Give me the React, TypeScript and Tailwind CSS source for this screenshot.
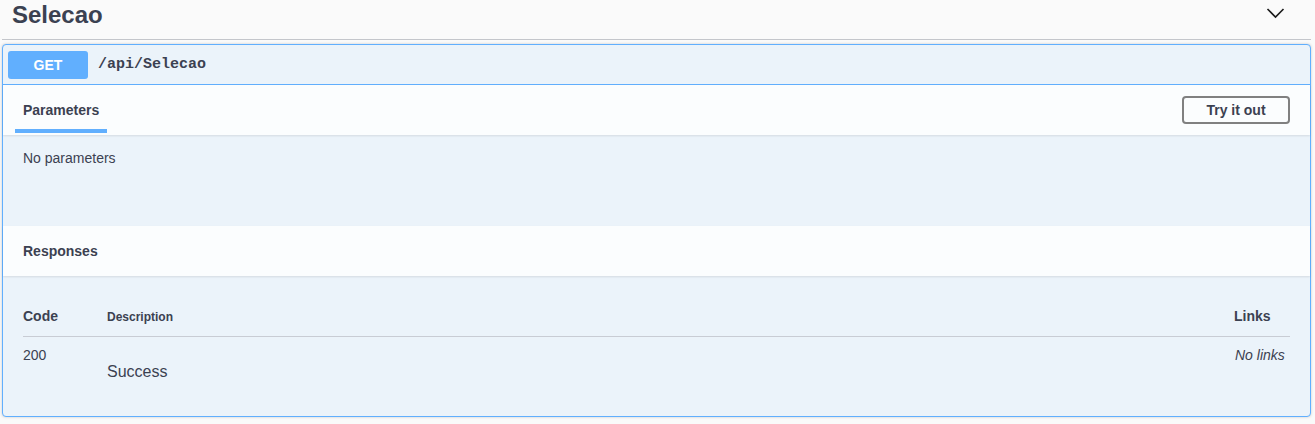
import React from "react";

export default function App() {
  return (
    <div
      className="min-h-[424px] w-full bg-[#fafafa] pl-[2px] pr-[4px] text-[#3b4151]"
      style={{ fontFamily: '"Liberation Sans", Arial, sans-serif' }}
    >
      {/* Tag header */}
      <div className="flex h-[40px] items-start justify-between border-b border-[#c4c6cb] pl-[10px] pr-[26px]">
        <h3 className="pt-[1px] text-[24px] font-bold leading-[27px]">Selecao</h3>
        <svg width="19" height="12" viewBox="0 0 19 12" className="mt-[7px]">
          <polyline points="1.5,2 9.5,10 17.5,2" fill="none" stroke="#1a1a1a" strokeWidth="1.6" />
        </svg>
      </div>

      {/* Opblock */}
      <div className="mt-[4px] rounded-[4px] border border-[#61affe] bg-[#ebf3fa] shadow-[0_0_3px_rgba(0,0,0,0.19)]">
        {/* Summary */}
        <div className="flex items-center border-b border-[#61affe] pb-[5px] pl-[5px] pt-[6px]">
          <span className="flex h-[28px] w-[80px] items-center justify-center rounded-[3px] bg-[#61affe] text-[14px] font-bold text-white">
            GET
          </span>
          <span
            className="px-[10px] text-[15px] font-bold text-[#3b4151]"
            style={{ fontFamily: '"Liberation Mono", "Courier New", monospace' }}
          >
            /api/Selecao
          </span>
        </div>

        {/* Parameters header */}
        <div className="flex h-[50px] items-stretch justify-between bg-[#fbfdfe] px-[20px] shadow-[0_1px_2px_rgba(0,0,0,0.1)]">
          <div className="-ml-[8px] flex flex-col pt-[6px]">
            <div className="flex flex-1 items-center px-[8px] text-[14px] font-bold">Parameters</div>
            <div className="mb-[2px] h-[4px] bg-[#61affe]" />
          </div>
          <div className="flex items-center">
            <button className="flex h-[28px] w-[108px] items-center justify-center rounded-[4px] border-2 border-[#808080] bg-transparent text-[14px] font-bold text-[#3b4151]">
              Try it out
            </button>
          </div>
        </div>

        {/* Parameters body */}
        <div className="h-[91px] px-[20px] pt-[13px] text-[14px]">No parameters</div>

        {/* Responses header */}
        <div className="flex h-[50px] items-center bg-[#fbfdfe] px-[20px] shadow-[0_1px_2px_rgba(0,0,0,0.1)]">
          <span className="text-[14px] font-bold">Responses</span>
        </div>

        {/* Responses body */}
        <div className="h-[140px] px-[20px] pt-[30px]">
          <div className="flex items-baseline border-b border-[#c8ccd4] pb-[9px]">
            <div className="w-[84px] text-[14px] font-bold">Code</div>
            <div className="flex-1 text-[12px] font-bold">Description</div>
            <div className="w-[56px] text-[14px] font-bold">Links</div>
          </div>
          <div className="flex items-start pt-[8px]">
            <div className="w-[84px] text-[14px]">200</div>
            <div className="flex-1 pt-[15px] text-[16px]">Success</div>
            <div className="w-[56px] pl-px text-[14px] italic">No links</div>
          </div>
        </div>
      </div>
    </div>
  );
}
